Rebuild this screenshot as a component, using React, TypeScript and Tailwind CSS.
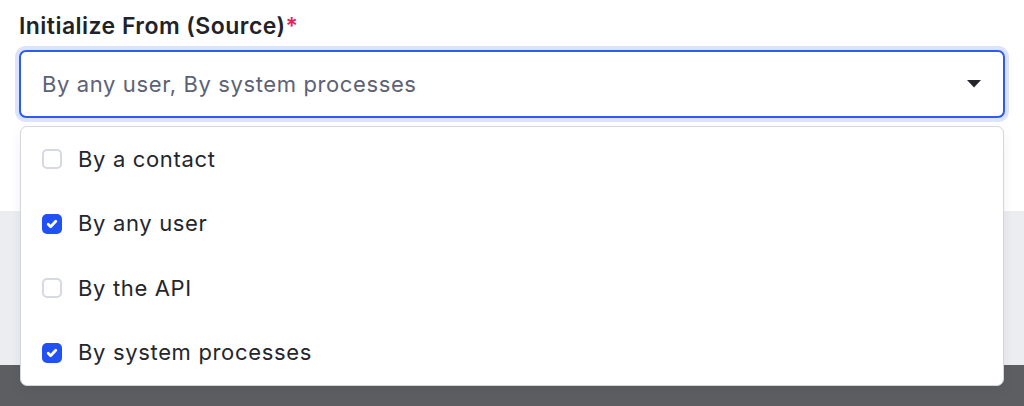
import { useState } from "react";

const options = [
  { id: "contact", label: "By a contact" },
  { id: "user", label: "By any user" },
  { id: "api", label: "By the API" },
  { id: "system", label: "By system processes" },
];

function Check({ checked }: { checked: boolean }) {
  if (!checked) {
    return <span className="block h-[20px] w-[20px] rounded-[5px] border-2 border-[#d6d9e2] bg-white" />;
  }
  return (
    <span className="flex h-[20px] w-[20px] items-center justify-center rounded-[5px] bg-[#2150f5]">
      <svg width="12" height="12" viewBox="0 0 12 12" fill="none">
        <path d="M2.2 6.3l2.4 2.4 5.2-5.4" stroke="white" strokeWidth="2.8" strokeLinecap="round" strokeLinejoin="round" />
      </svg>
    </span>
  );
}

export default function App() {
  const [selected, setSelected] = useState<string[]>(["user", "system"]);

  const toggle = (id: string) =>
    setSelected((s) => (s.includes(id) ? s.filter((x) => x !== id) : [...s, id]));

  const summary = options.filter((o) => selected.includes(o.id)).map((o) => o.label).join(", ");

  return (
    <div className="relative h-[406px] w-full overflow-hidden font-['Inter',sans-serif]">
      {/* form area */}
      <div className="h-[211px] bg-white px-[19px] pt-[12px]">
        <label className="block text-[23px] font-semibold leading-[28px] tracking-[0.02em] text-[#1f2329]">
          Initialize From (Source)<span className="text-[#e0245e]">*</span>
        </label>
        <div className="relative mt-[10px]">
          <button className="flex h-[68px] w-full items-center justify-between rounded-[7px] border-2 border-[#2e5bf0] bg-white pl-[21px] pr-[22px] ring-[4px] ring-[#dbe3fd] outline-none">
            <span className="text-[22px] tracking-[0.028em] text-[#5c6275]">{summary}</span>
            <svg width="14" height="8" viewBox="0 0 14 8">
              <path d="M0 0h14L7 7.5z" fill="#23252a" />
            </svg>
          </button>

          {/* dropdown menu */}
          <div className="absolute left-[1px] right-[1px] top-[76px] z-10 rounded-[7px] border border-[#d3d6de] bg-white shadow-[0_4px_12px_rgba(0,0,0,0.06)]">
            {options.map((o) => (
              <div
                key={o.id}
                onClick={() => toggle(o.id)}
                className="flex h-[64.5px] cursor-pointer items-center gap-[16px] pl-[21px]"
              >
                <Check checked={selected.includes(o.id)} />
                <span className="text-[22px] tracking-[0.03em] text-[#24262b]">{o.label}</span>
              </div>
            ))}
          </div>
        </div>
      </div>
      <div className="h-[154px] bg-[#ecedf1]" />
      <div className="h-[41px] bg-[#5d5e62]" />
    </div>
  );
}
